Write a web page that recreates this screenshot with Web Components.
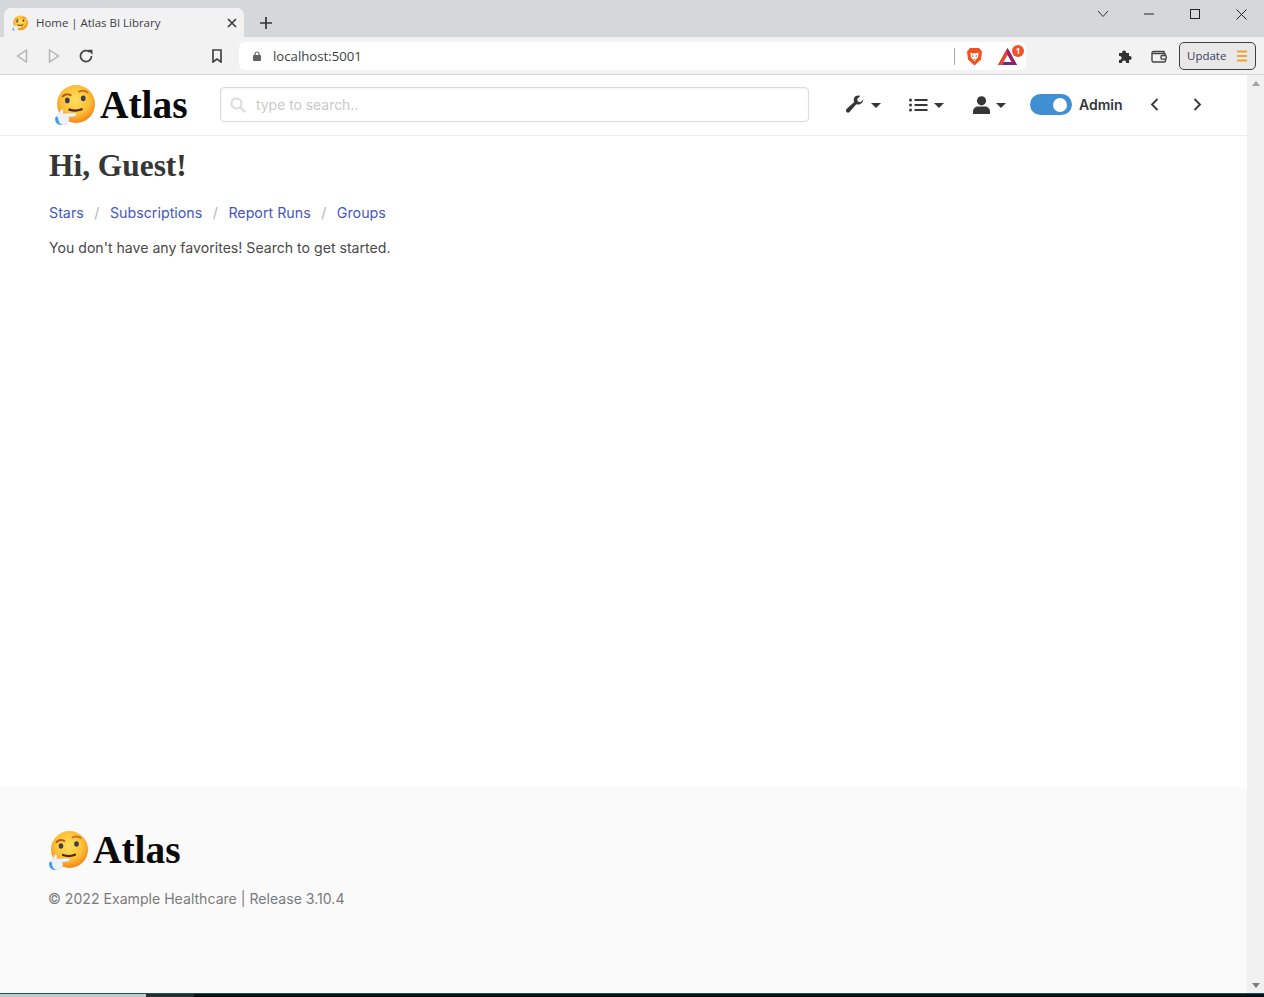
<!DOCTYPE html>
<html lang="en">
<head>
<meta charset="utf-8">
<title>Home | Atlas BI Library</title>
<style>
  html, body { margin: 0; height: 100%; overflow: hidden; background: #fff; }
  body { display: flex; flex-direction: column; height: 997px; font-family: Inter, "Liberation Sans", sans-serif; }
</style>
</head>
<body>
<browser-tabs></browser-tabs>
<browser-toolbar></browser-toolbar>
<browser-viewport>
  <atlas-nav></atlas-nav>
  <atlas-home></atlas-home>
  <atlas-footer></atlas-footer>
</browser-viewport>
<desktop-strip></desktop-strip>

<script>
class ThinkingFace extends HTMLElement {
  static count = 0;
  constructor() {
    super();
    this.attachShadow({ mode: "open" });
  }
  connectedCallback() {
    const id = "f" + ThinkingFace.count++;
    this.shadowRoot.innerHTML = `
    <style>
      :host { display: inline-block; width: var(--size, 40px); height: var(--size, 40px); flex: none; }
      svg { display: block; width: 100%; height: 100%; }
    </style>
    <svg viewBox="0 0 40 40">
      <defs>
        <radialGradient id="${id}" cx="48%" cy="40%" r="60%">
          <stop offset="0" stop-color="#fedf5e"/>
          <stop offset=".62" stop-color="#fcc136"/>
          <stop offset="1" stop-color="#f4851a"/>
        </radialGradient>
      </defs>
      <circle cx="21.5" cy="19.5" r="18.5" fill="url(#${id})"/>
      <path d="M8.500 12c2.200-2 5.400-2.300 7.800-1.100" fill="none" stroke="#b9581b" stroke-width="1.900" stroke-linecap="round"/>
      <path d="M24.500 7.500c2.800-1.300 6-1 8 .6" fill="none" stroke="#d0701f" stroke-width="1.900" stroke-linecap="round"/>
      <ellipse cx="13" cy="16" rx="2.300" ry="2.800" fill="#3b3f4f"/>
      <ellipse cx="28.500" cy="14" rx="2.300" ry="2.800" fill="#3b3f4f"/>
      <path d="M15 25c4 1.500 8 1.400 12-.3" fill="none" stroke="#4f2410" stroke-width="2.200" stroke-linecap="round"/>
      <path d="M1.200 33c.2-1.800 2.400-3 3.800-4l1.400-3.500c.7-1.300 2.500-.8 2.500.6l-.1 2.900 11.300-.6c1.700 0 1.900 2.500.2 2.800l-6 .9.400 2.800c-.4 2.800-2.800 5-6.300 5.400-4.200.4-7.400-1.600-7.200-7.300z" fill="#eef2f7" stroke="#cfdae6" stroke-width=".5"/>
      <path d="M1.200 33c-.4 4.900 2.600 7.200 7.400 7.100-3-.9-4.600-3.400-4.800-7.700l-1.400-.8z" fill="#3f9be8"/>
    </svg>`;
  }
}
customElements.define("thinking-face", ThinkingFace);

class BrowserTabs extends HTMLElement {
  constructor() {
    super();
    this.attachShadow({ mode: "open" }).innerHTML = `
    <style>
      :host { display: flex; align-items: flex-end; height: 37px; background: #d5d8db; flex: none; padding-left: 4px; font-family: "Open Sans", "Noto Sans", sans-serif; }
      .tab { width: 240px; height: 29px; box-sizing: border-box; background: #f2f2f3; border-radius: 7px 7px 0 0; display: flex; align-items: center; padding: 0 6px 0 8px; --size: 16px; }
      .title { margin-left: 8px; flex: 1; font-size: 11.450px; color: #3c4043; white-space: nowrap; }
      .plus { margin-left: 15px; align-self: center; margin-top: 8px; display: block; }
      .win { margin-left: auto; align-self: flex-start; display: flex; }
      .win div { width: 46px; height: 28px; display: flex; align-items: center; justify-content: center; }
    </style>
    <div class="tab">
      <thinking-face></thinking-face>
      <span class="title">Home | Atlas BI Library</span>
      <svg width="12" height="12" viewBox="0 0 12 12"><path d="M2 2l8 8M10 2l-8 8" stroke="#3c4043" stroke-width="1.700"/></svg>
    </div>
    <svg class="plus" width="14" height="14" viewBox="0 0 14 14"><path d="M7 1v12M1 7h12" stroke="#333" stroke-width="1.700"/></svg>
    <div class="win">
      <div><svg width="12" height="8" viewBox="0 0 12 8"><path d="M1 1l5 5.500L11 1" fill="none" stroke="#333"/></svg></div>
      <div><svg width="11" height="2" viewBox="0 0 11 2"><path d="M0 1h10" stroke="#222"/></svg></div>
      <div><svg width="11" height="11" viewBox="0 0 11 11"><rect x=".5" y=".5" width="9" height="9" fill="none" stroke="#222"/></svg></div>
      <div><svg width="11" height="11" viewBox="0 0 11 11"><path d="M.5.500l10 10M10.500.500l-10 10" stroke="#222"/></svg></div>
    </div>`;
  }
}
customElements.define("browser-tabs", BrowserTabs);

class BrowserToolbar extends HTMLElement {
  constructor() {
    super();
    this.attachShadow({ mode: "open" }).innerHTML = `
    <style>
      :host { display: flex; align-items: center; height: 38px; box-sizing: border-box; background: #f2f2f3; border-bottom: 1px solid #d3d3d3; flex: none; padding: 1px 8px 0 16px; font-family: "Open Sans", "Noto Sans", sans-serif; }
      .nav { display: flex; align-items: center; gap: 20px; }
      .nav svg { display: block; }
      .nav .reload { margin-left: -1px; }
      .mark { margin-left: 119px; display: block; }
      .omni { margin-left: 17px; width: 787px; height: 28px; background: #fff; border-radius: 6px; display: flex; align-items: center; padding-left: 14px; box-sizing: border-box; }
      .url { margin-left: 12px; font-size: 13.200px; color: #3c4043; flex: 1; }
      .sep { width: 1px; height: 17px; background: #aaa; }
      .lion { margin-left: 11px; }
      .bat { position: relative; margin-left: 15px; margin-right: 1px; width: 27px; height: 20px; }
      .bat b { position: absolute; top: -1px; right: 1px; width: 12px; height: 12px; border-radius: 50%; background: #f4502a; color: #fff; font: 700 8px/12px "Open Sans", sans-serif; text-align: center; }
      .puzzle { margin-left: 92px; display: block; }
      .wallet { margin-left: 18px; display: block; }
      .update { margin-left: 12px; width: 77px; height: 28px; box-sizing: border-box; border: 1px solid #3c4043; border-radius: 5px; background: #e8e8e9; display: flex; align-items: center; justify-content: space-between; padding: 0 8px 2px 7px; font-size: 11.500px; color: #3c3c5c; }
      .menu { display: block; margin-top: 2px; }
    </style>
    <div class="nav">
      <svg width="12" height="14" viewBox="0 0 12 14"><path d="M10.500 1L1.500 7l9 6z" fill="none" stroke="#b3b3b3" stroke-width="1.400"/></svg>
      <svg width="12" height="14" viewBox="0 0 12 14"><path d="M1.500 1l9 6-9 6z" fill="none" stroke="#b3b3b3" stroke-width="1.400"/></svg>
      <svg class="reload" width="14" height="14" viewBox="0 0 14 14"><path d="M12.500 7A5.500 5.500 0 1 1 10.700 3" fill="none" stroke="#444" stroke-width="1.700"/><path d="M8.500 .8h5v5z" fill="#444"/></svg>
    </div>
    <svg class="mark" width="10" height="14" viewBox="0 0 10 14"><path d="M1 1h8v12L5 10l-4 3z" fill="none" stroke="#444" stroke-width="1.700"/></svg>
    <div class="omni">
      <svg width="8" height="10" viewBox="0 0 8 10"><path d="M2 4.500V3a2 2 0 0 1 4 0v1.500" fill="none" stroke="#5f6368" stroke-width="1.200"/><rect y="4" width="8" height="6" rx="1" fill="#5f6368"/></svg>
      <span class="url">localhost:5001</span>
      <span class="sep"></span>
      <svg class="lion" width="17" height="19" viewBox="0 0 17 19"><path d="M4 1h9l3 3.500-1 8-6.500 6-6.500-6-1-8z" fill="#f1501f"/><path d="M4.500 5.500l2.500 1 1.500-.6 1.500.6 2.500-1-.4 4.500-3.600 4.500-3.600-4.500z" fill="#fff"/><circle cx="6.700" cy="9" r=".8" fill="#f1501f"/><circle cx="10.300" cy="9" r=".8" fill="#f1501f"/><path d="M7.300 12h2.400l-1.200 1.300z" fill="#f1501f"/></svg>
      <div class="bat">
        <svg width="20" height="18" viewBox="0 0 20 18" style="position:absolute;left:0;top:2px"><path d="M9.500 0L0 17h19z" fill="#662d91"/><path d="M9.500 0L0 17h4.500L9.500 8z" fill="#e8452c"/><path d="M9.500 0l9.500 17h-4.500L9.500 8z" fill="#9e1f63"/><path d="M9.500 7l4 7h-8z" fill="#fff"/></svg>
        <b>1</b>
      </div>
    </div>
    <svg class="puzzle" width="15" height="15" viewBox="0 0 15 15"><path d="M1 4h3.200a2 2 0 1 1 3.800 0H11v3a2 2 0 1 1 0 3.800V14H8a2 2 0 1 0-3.800 0H1v-3.200a2 2 0 1 0 0-3.800z" fill="#333"/></svg>
    <svg class="wallet" width="16" height="13" viewBox="0 0 16 13"><path d="M13 3V1.500H2.500a1.500 1.500 0 0 0-1.500 1.500v7.500A1.500 1.500 0 0 0 2.500 12H13a1.500 1.500 0 0 0 1.500-1.500V9" fill="none" stroke="#444" stroke-width="1.400"/><path d="M1.500 3.500H13a1.500 1.500 0 0 1 1.500 1.500" fill="none" stroke="#444" stroke-width="1.400"/><rect x="10" y="5.500" width="5.300" height="3.600" rx="1.200" fill="none" stroke="#444" stroke-width="1.400"/></svg>
    <div class="update">
      <span>Update</span>
      <svg class="menu" width="10" height="12" viewBox="0 0 10 12"><path d="M0 1.500h10M0 6h10M0 10.500h10" stroke="#f0a030" stroke-width="2"/></svg>
    </div>`;
  }
}
customElements.define("browser-toolbar", BrowserToolbar);

class BrowserViewport extends HTMLElement {
  constructor() {
    super();
    this.attachShadow({ mode: "open" }).innerHTML = `
    <style>
      :host { display: flex; flex: 1; min-height: 0; }
      .page { flex: 1; min-width: 0; display: flex; flex-direction: column; background: #fff; }
      .bar { width: 17px; flex: none; background: #f1f1f1; display: flex; flex-direction: column; justify-content: space-between; align-items: center; padding: 6px 0 5px; box-sizing: border-box; }
      .bar i { display: block; width: 0; height: 0; border-left: 4.500px solid transparent; border-right: 4.500px solid transparent; }
      .up { border-bottom: 5px solid #a3a3a3; }
      .down { border-top: 5px solid #7d7d7d; }
    </style>
    <div class="page"><slot></slot></div>
    <div class="bar"><i class="up"></i><i class="down"></i></div>`;
  }
}
customElements.define("browser-viewport", BrowserViewport);

class AtlasNav extends HTMLElement {
  constructor() {
    super();
    this.attachShadow({ mode: "open" }).innerHTML = `
    <style>
      :host { display: flex; align-items: center; height: 61px; box-sizing: border-box; border-bottom: 1px solid #ededed; flex: none; padding: 0 0 1px 54px; color: #363636; --size: 41px; }
      .brand { display: flex; align-items: center; width: 166px; }
      .name { margin-left: 5px; padding-top: 2px; font: 700 39.400px/1 "Liberation Serif", serif; color: #0a0a0a; }
      .search { width: 589px; height: 35px; box-sizing: border-box; border: 1px solid #dbdbdb; border-radius: 4px; display: flex; align-items: center; padding-left: 9px; box-shadow: inset 0 1px 2px rgba(10,10,10,.05); }
      .search span { margin-left: 10px; font-size: 13.900px; color: #c9c9c9; }
      .tool { display: flex; align-items: center; gap: 6px; }
      .caret { width: 0; height: 0; border-left: 5px solid transparent; border-right: 5px solid transparent; border-top: 5px solid #363636; margin-top: 2px; }
      .wrench { margin-left: 36px; }
      .list { margin-left: 28px; }
      .user { margin-left: 29px; }
      .toggle { margin-left: 24px; width: 42px; height: 21px; border-radius: 11px; background: #3f8fd2; display: flex; align-items: center; justify-content: flex-end; padding-right: 5px; box-sizing: border-box; }
      .toggle i { width: 14px; height: 14px; border-radius: 50%; background: #fff; }
      .admin { margin-left: 7px; font-size: 14px; font-weight: 600; color: #363636; }
      .chev { display: block; }
      .prev { margin-left: 27px; }
      .next { margin-left: 34px; }
    </style>
    <div class="brand"><thinking-face></thinking-face><span class="name">Atlas</span></div>
    <div class="search">
      <svg width="16" height="16" viewBox="0 0 16 16"><circle cx="6.500" cy="6.500" r="5" fill="none" stroke="#dbdbdb" stroke-width="2"/><path d="M10.500 10.500l4 4" stroke="#dbdbdb" stroke-width="2.200" stroke-linecap="round"/></svg>
      <span>type to search..</span>
    </div>
    <div class="tool wrench">
      <svg width="20" height="19" viewBox="0 0 20 19"><path d="M18.500 4.200l-3 3-2.700-.6-.6-2.700 3-3c-2.400-.8-5 0-6 2-.7 1.400-.6 2.900 0 4.200L1.500 14a2.100 2.100 0 0 0 3 3l6.800-7.800c1.300.5 2.800.5 4-.2 2.200-1.200 3.300-3.500 2.700-4.800z" fill="#363636"/></svg>
      <span class="caret"></span>
    </div>
    <div class="tool list">
      <svg width="19" height="14" viewBox="0 0 19 14"><path d="M5.500 2h13M5.500 7h13M5.500 12h13" stroke="#363636" stroke-width="2"/><circle cx="1.500" cy="2" r="1.500" fill="#363636"/><circle cx="1.500" cy="7" r="1.500" fill="#363636"/><circle cx="1.500" cy="12" r="1.500" fill="#363636"/></svg>
      <span class="caret"></span>
    </div>
    <div class="tool user">
      <svg width="17" height="18" viewBox="0 0 17 18"><circle cx="8.500" cy="4.800" r="4.600" fill="#363636"/><path d="M0 18v-2.500C0 12.500 2.500 10.500 5 10.500h7c2.500 0 5 2 5 5V18z" fill="#363636"/></svg>
      <span class="caret"></span>
    </div>
    <div class="toggle"><i></i></div>
    <span class="admin">Admin</span>
    <svg class="chev prev" width="9" height="13" viewBox="0 0 9 13"><path d="M7.500 1L2 6.500 7.500 12" fill="none" stroke="#363636" stroke-width="1.800"/></svg>
    <svg class="chev next" width="9" height="13" viewBox="0 0 9 13"><path d="M1.500 1L7 6.500 1.500 12" fill="none" stroke="#363636" stroke-width="1.800"/></svg>`;
  }
}
customElements.define("atlas-nav", AtlasNav);

class AtlasHome extends HTMLElement {
  constructor() {
    super();
    this.attachShadow({ mode: "open" }).innerHTML = `
    <style>
      :host { display: block; flex: 1; padding: 12px 49px 0; color: #363636; }
      h1 { margin: 0; font: 700 31.400px/36px "Liberation Serif", serif; color: #363636; }
      nav { margin-top: 18px; display: flex; font-size: 14.250px; line-height: 22px; }
      a { color: #4558c0; text-decoration: none; }
      nav span { color: #b5b5b5; padding: 0 10.500px; }
      p { margin: 13px 0 0; font-size: 14.120px; line-height: 22px; color: #4a4a4a; }
    </style>
    <h1>Hi, Guest!</h1>
    <nav>
      <a href="#">Stars</a><span>/</span>
      <a href="#">Subscriptions</a><span>/</span>
      <a href="#">Report Runs</a><span>/</span>
      <a href="#">Groups</a>
    </nav>
    <p>You don't have any favorites! Search to get started.</p>`;
  }
}
customElements.define("atlas-home", AtlasHome);

class AtlasFooter extends HTMLElement {
  constructor() {
    super();
    this.attachShadow({ mode: "open" }).innerHTML = `
    <style>
      :host { display: block; height: 206px; box-sizing: border-box; flex: none; background: #fafafa; padding: 42px 48px 0; --size: 40px; }
      .brand { display: flex; align-items: center; }
      .name { margin-left: 5px; padding-top: 2px; font: 700 39.400px/1 "Liberation Serif", serif; color: #0a0a0a; }
      p { margin: 18px 0 0; font-size: 14.100px; line-height: 22px; color: #7a7a7a; }
    </style>
    <div class="brand"><thinking-face></thinking-face><span class="name">Atlas</span></div>
    <p>© 2022 Example Healthcare | Release 3.10.4</p>`;
  }
}
customElements.define("atlas-footer", AtlasFooter);

class DesktopStrip extends HTMLElement {
  constructor() {
    super();
    this.attachShadow({ mode: "open" }).innerHTML = `
    <style>
      :host { display: flex; height: 4px; flex: none; border-top: 1px solid #1f4f66; box-sizing: border-box; background: #0e0e0e; }
      .a { width: 146px; background: #c9c9c9; }
      .b { width: 48px; background: #2b2b2b; }
    </style>
    <div class="a"></div><div class="b"></div>`;
  }
}
customElements.define("desktop-strip", DesktopStrip);
</script>
</body>
</html>
